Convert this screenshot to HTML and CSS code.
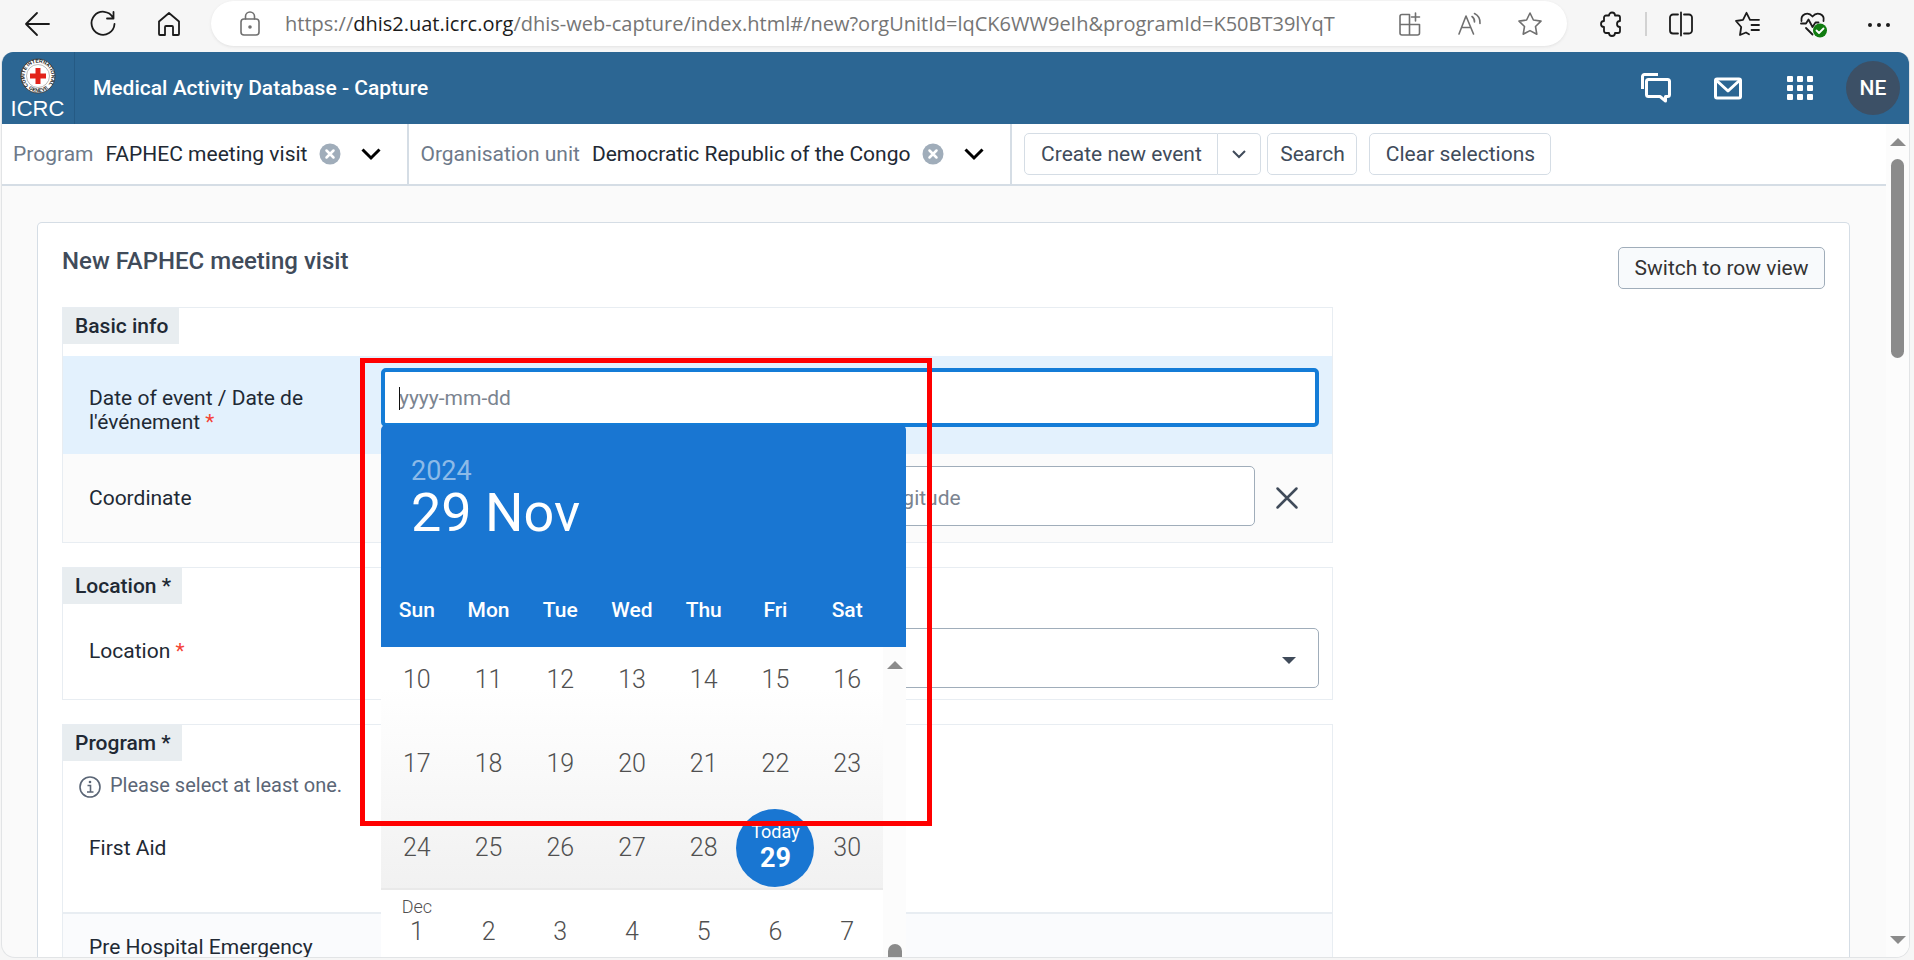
FILE: index.html
```html
<!DOCTYPE html>
<html lang="en">
<head>
<meta charset="utf-8">
<title>Medical Activity Database - Capture</title>
<link rel="stylesheet" href="styles.css">
</head>
<body>
<div class="toolbar">
  <div class="nav">
    <button class="tool" aria-label="Back"><svg viewBox="0 0 28 28"><path d="M26 14H3M14 3 3 14l11 11"/></svg></button>
    <button class="tool" aria-label="Refresh"><svg viewBox="0 0 28 28"><path d="M24 7.500A11.500 11.500 0 1 0 25.500 14M24.500 2v6.500h-6.500"/></svg></button>
    <button class="tool" aria-label="Home"><svg viewBox="0 0 28 28"><path d="M4 11.500 14 3l10 8.500V24a1 1 0 0 1-1 1h-5v-8a1 1 0 0 0-1-1h-6a1 1 0 0 0-1 1v8H5a1 1 0 0 1-1-1z"/></svg></button>
  </div>
  <div class="address">
    <button class="tool muted" aria-label="Site information"><svg viewBox="0 0 28 28"><rect x="5" y="9" width="18" height="16" rx="3"/><path d="M9.500 9V6.500a4.500 4.500 0 0 1 9 0V9"/><circle cx="14" cy="17" r="1" class="solid"/></svg></button>
    <div class="url">https://<span class="host">dhis2.uat.icrc.org</span>/dhis-web-capture/index.html#/new?orgUnitId=lqCK6WW9eIh&amp;programId=K50BT39lYqT</div>
    <div class="address-actions">
      <button class="tool muted" aria-label="Install app"><svg viewBox="0 0 28 28"><path d="M13.500 4.500H6A2 2 0 0 0 4 6.500v16.500a2 2 0 0 0 2 2h15.500a2 2 0 0 0 2-2v-8.500H4M13.500 4.500V25M19.500 3v8M15.500 7h8"/></svg></button>
      <button class="tool muted" aria-label="Read aloud"><svg viewBox="0 0 28 28"><path d="M3 24 10 6l7.500 18M5.800 17.500h9M16 6.500a6 6 0 0 1 2.500 5.500M18.500 3.500q6 3 5.500 10"/></svg></button>
      <button class="tool muted" aria-label="Add to favourites"><svg viewBox="0 0 28 28"><path d="m14 3 3.400 7 7.600 1.100-5.500 5.400 1.300 7.700-6.800-3.600-6.800 3.600 1.300-7.700L3 11.100 10.600 10z"/></svg></button>
    </div>
  </div>
  <div class="tools">
    <button class="tool" aria-label="Extensions"><svg viewBox="0 0 28 28"><path d="M9 5.500h3a3 3 0 0 1 6 0h3a2 2 0 0 1 2 2v3.500a3 3 0 0 0 0 6v4a2 2 0 0 1-2 2h-3a3 3 0 0 1-6 0H9a2 2 0 0 1-2-2v-4a3 3 0 0 1 0-6V7.500a2 2 0 0 1 2-2z"/></svg></button>
    <span class="tool-divider"></span>
    <button class="tool" aria-label="Split screen"><svg viewBox="0 0 28 28"><path d="M11 4.500H6a3 3 0 0 0-3 3v13a3 3 0 0 0 3 3h5M17 4.500h5a3 3 0 0 1 3 3v13a3 3 0 0 1-3 3h-5M14 2.500v23"/></svg></button>
    <button class="tool" aria-label="Favourites"><svg viewBox="0 0 28 28"><path d="M16 24.200v0l-3-1.700-6 2.500 1.200-8L3 11l7-1.200 3.500-7L17 9.800h9M18.500 15H26M18.500 20H26"/></svg></button>
    <button class="tool" aria-label="Browser essentials"><svg viewBox="0 0 28 28"><path d="M2.500 11C1.500 4 9 1 13.500 6.500 18 1 26 4 24.500 11M2 13.500h5l2.500-4 4 7.500 3-4.500h3M7 18l6.500 6.500"/><circle cx="21" cy="20.500" r="7" class="ok"/><path class="check" d="m17.500 20.500 2.500 2.500 4.500-4.500"/></svg></button>
    <button class="tool" aria-label="Settings and more"><svg viewBox="0 0 28 28"><circle class="dot" cx="5" cy="15" r="2"/><circle class="dot" cx="14" cy="15" r="2"/><circle class="dot" cx="23" cy="15" r="2"/></svg></button>
  </div>
</div>

<div class="app">
  <header class="header">
    <a class="logo" href="#" aria-label="ICRC">
      <svg class="emblem" viewBox="0 0 36 36">
        <circle cx="18" cy="18" r="17" fill="#fff" stroke="#444" stroke-width="1"/>
        <defs>
          <path id="ring-top" d="M9.400 28.300A13.400 13.400 0 1 1 26.600 28.300"/>
          <path id="ring-bottom" d="M7 29.500A16 16 0 0 0 29 29.500"/>
        </defs>
        <text class="ring"><textPath href="#ring-top" startOffset="1">COMITE INTERNATIONAL</textPath></text>
        <text class="ring"><textPath href="#ring-bottom" startOffset="2">GENEVE</textPath></text>
        <circle cx="18" cy="18" r="11.500" fill="#fff" stroke="#777" stroke-width=".5"/>
        <path d="M15.500 10h5v5.500H26v5h-5.500V26h-5v-5.500H10v-5h5.500z" fill="#e2231a"/>
      </svg>
      <span class="logo-name">ICRC</span>
    </a>
    <h1 class="app-title">Medical Activity Database - Capture</h1>
    <div class="header-actions">
      <button class="header-icon" aria-label="Interpretations"><svg viewBox="0 0 32 32"><path d="M2.500 17V4.500a2 2 0 0 1 2-2H18M8.500 7.500h19a2 2 0 0 1 2 2v13a2 2 0 0 1-2 2H25.500V29l-5.500-4.500H8.500a2 2 0 0 1-2-2v-13a2 2 0 0 1 2-2z"/></svg></button>
      <button class="header-icon" aria-label="Messages"><svg viewBox="0 0 32 32"><rect x="3.500" y="7" width="25" height="19" rx="1.500"/><path d="m4 8 12 11L28 8"/></svg></button>
      <button class="header-icon" aria-label="Apps"><svg viewBox="0 0 32 32"><g class="tiles"><rect x="3" y="4" width="6" height="6" rx="1"/><rect x="13" y="4" width="6" height="6" rx="1"/><rect x="23" y="4" width="6" height="6" rx="1"/><rect x="3" y="13" width="6" height="6" rx="1"/><rect x="13" y="13" width="6" height="6" rx="1"/><rect x="23" y="13" width="6" height="6" rx="1"/><rect x="3" y="22" width="6" height="6" rx="1"/><rect x="13" y="22" width="6" height="6" rx="1"/><rect x="23" y="22" width="6" height="6" rx="1"/></g></svg></button>
      <button class="avatar">NE</button>
    </div>
  </header>

  <div class="body">
    <main class="main">
      <div class="selector">
        <div class="context program">
          <span class="context-label">Program</span>
          <span class="context-value">FAPHEC meeting visit</span>
          <button class="clear" aria-label="Clear program"><svg viewBox="0 0 22 22"><circle cx="11" cy="11" r="10.500"/><path d="m7.500 7.500 7 7m0-7-7 7"/></svg></button>
          <button class="expand" aria-label="Choose program"><svg viewBox="0 0 20 20"><path d="m1.500 5.500 8.500 8.500 8.500-8.500"/></svg></button>
        </div>
        <div class="context unit">
          <span class="context-label">Organisation unit</span>
          <span class="context-value">Democratic Republic of the Congo</span>
          <button class="clear" aria-label="Clear organisation unit"><svg viewBox="0 0 22 22"><circle cx="11" cy="11" r="10.500"/><path d="m7.500 7.500 7 7m0-7-7 7"/></svg></button>
          <button class="expand" aria-label="Choose organisation unit"><svg viewBox="0 0 20 20"><path d="m1.500 5.500 8.500 8.500 8.500-8.500"/></svg></button>
        </div>
        <div class="actions">
          <div class="split">
            <button class="btn create">Create new event</button>
            <button class="btn more" aria-label="More create options"><svg viewBox="0 0 16 16"><path d="m2 5 6 6 6-6"/></svg></button>
          </div>
          <button class="btn search">Search</button>
          <button class="btn clear-all">Clear selections</button>
        </div>
      </div>

      <form class="card">
        <div class="card-head">
          <h2 class="card-title">New FAPHEC meeting visit</h2>
          <button type="button" class="btn switch">Switch to row view</button>
        </div>

        <section class="section basic">
          <h3 class="section-title">Basic info</h3>
          <div class="row active">
            <label class="label" for="event-date">Date of event / Date de l'événement <span class="required">*</span></label>
            <div class="field date-field">
              <input class="input focused" id="event-date" type="text" placeholder="yyyy-mm-dd">
              <span class="caret"></span>
              <div class="picker">
                <div class="picker-head">
                  <div class="picker-year">2024</div>
                  <div class="picker-date">29 Nov</div>
                  <div class="weekdays"><span>Sun</span><span>Mon</span><span>Tue</span><span>Wed</span><span>Thu</span><span>Fri</span><span>Sat</span></div>
                </div>
                <div class="picker-body">
                  <div class="weeks">
                    <div class="days november">
                      <button type="button" class="day">10</button><button type="button" class="day">11</button><button type="button" class="day">12</button><button type="button" class="day">13</button><button type="button" class="day">14</button><button type="button" class="day">15</button><button type="button" class="day">16</button>
                      <button type="button" class="day">17</button><button type="button" class="day">18</button><button type="button" class="day">19</button><button type="button" class="day">20</button><button type="button" class="day">21</button><button type="button" class="day">22</button><button type="button" class="day">23</button>
                      <button type="button" class="day">24</button><button type="button" class="day">25</button><button type="button" class="day">26</button><button type="button" class="day">27</button><button type="button" class="day">28</button><button type="button" class="day"><span class="today"><span class="today-label">Today</span><span>29</span></span></button><button type="button" class="day">30</button>
                    </div>
                    <div class="days">
                      <button type="button" class="day"><span class="month">Dec</span>1</button><button type="button" class="day">2</button><button type="button" class="day">3</button><button type="button" class="day">4</button><button type="button" class="day">5</button><button type="button" class="day">6</button><button type="button" class="day">7</button>
                    </div>
                  </div>
                  <div class="picker-scroll"><span class="arrow-up"></span><span class="picker-thumb"></span></div>
                </div>
              </div>
              <div class="highlight"></div>
            </div>
          </div>
          <div class="row coordinate">
            <span class="label">Coordinate</span>
            <div class="field pair">
              <input class="input latitude" type="text" aria-label="Latitude">
              <input class="input longitude" type="text" aria-label="Longitude" placeholder="Longitude">
              <button type="button" class="remove" aria-label="Clear coordinate"><svg viewBox="0 0 24 24"><path d="m2.500 2.500 19 19m0-19-19 19"/></svg></button>
            </div>
          </div>
        </section>

        <section class="section location">
          <h3 class="section-title">Location *</h3>
          <div class="row">
            <label class="label" for="location">Location <span class="required">*</span></label>
            <div class="field select-field">
              <select class="input" id="location"><option></option></select>
              <span class="select-arrow"></span>
            </div>
          </div>
        </section>

        <section class="section activities">
          <h3 class="section-title">Program *</h3>
          <p class="hint"><svg viewBox="0 0 22 22"><circle cx="11" cy="11" r="10"/><path d="M8.500 9.500H11.500V16M8 16h6.500"/><circle class="hint-dot" cx="11" cy="6" r="1.300"/></svg>Please select at least one.</p>
          <div class="row first-aid"><span class="label">First Aid</span></div>
          <div class="row alt"><span class="label">Pre Hospital Emergency</span></div>
        </section>
      </form>
    </main>
    <div class="scrollbar"><span class="arrow-up"></span><span class="thumb"></span><span class="arrow-down"></span></div>
  </div>
</div>
</body>
</html>
```
FILE: styles.css
```css
* { box-sizing: border-box; }

body {
  margin: 0;
  height: 100vh;
  display: flex;
  flex-direction: column;
  overflow: hidden;
  background: #f6f6f6;
  font-family: Roboto, sans-serif;
  font-size: 21px;
  line-height: 24px;
  color: #212934;
}

button {
  margin: 0;
  padding: 0;
  border: 0;
  background: none;
  font: inherit;
  color: inherit;
}

h1, h2, h3, p { margin: 0; }
svg { display: block; fill: none; }

/* Browser toolbar */
.toolbar {
  flex: none;
  display: flex;
  height: 52px;
  padding: 1px 21px 6px 23px;
}
.nav { display: flex; align-items: center; gap: 38px; margin-right: 28px; }
.tool { flex: none; width: 28px; height: 28px; }
.tool svg { width: 28px; height: 28px; stroke: #1b1b1b; stroke-width: 1.8; stroke-linecap: round; stroke-linejoin: round; }
.tool.muted svg { stroke: #707070; stroke-width: 1.6; }
.tool .solid { fill: #707070; }
.tool .dot { fill: #1b1b1b; stroke: none; }
.tool .ok { fill: #107c10; stroke: none; }
.tool .check { stroke: #fff; }
.address {
  flex: 1;
  min-width: 0;
  display: flex;
  align-items: center;
  gap: 21px;
  padding: 0 23px 0 25px;
  border-radius: 23px;
  background: #fff;
  box-shadow: 0 1px 3px #e2e2e2;
}
.url {
  flex: 1;
  min-width: 0;
  overflow: hidden;
  white-space: nowrap;
  font-family: "Open Sans", sans-serif;
  font-size: 20px;
  line-height: 28px;
  color: #757575;
}
.host { color: #1b1b1b; }
.address-actions { display: flex; gap: 32px; }
.tools { display: flex; align-items: center; gap: 38px; margin-left: 30px; }
.tool-divider { width: 2px; height: 24px; margin: 0 -18px; background: #d2d2d2; }

/* Application frame */
.app {
  flex: 1;
  min-height: 0;
  display: flex;
  flex-direction: column;
  margin: 0 4px 2px 1px;
  border: 1px solid #e2e4e6;
  border-top: 0;
  border-radius: 12px 12px 14px 14px;
  overflow: hidden;
  background: #fafafa;
}
.header {
  flex: none;
  display: flex;
  align-items: center;
  height: 72px;
  margin: 0 -1px;
  background: #2c6693;
  color: #fff;
}
.logo {
  display: flex;
  flex-direction: column;
  align-items: center;
  width: 74px;
  height: 72px;
  padding-top: 6px;
  border-right: 1px solid #255a84;
  color: #fff;
  text-decoration: none;
}
.emblem { width: 36px; height: 36px; }
.ring { font: 700 5px "Liberation Sans", sans-serif; fill: #222; }
.logo-name { font: 22px/30px "Liberation Sans", sans-serif; }
.app-title { margin-left: 18px; font-size: 21px; line-height: 24px; font-weight: 500; }
.header-actions { display: flex; align-items: center; gap: 40px; margin-left: auto; padding-right: 10px; }
.header-icon { width: 32px; height: 32px; }
.header-icon svg { width: 32px; height: 32px; stroke: #fff; stroke-width: 3; stroke-linejoin: round; }
.header-icon .tiles { fill: #fff; stroke: none; }
.avatar { width: 54px; height: 54px; margin-left: -10px; border-radius: 50%; background: #3c5066; font-weight: 500; }

.body { flex: 1; min-height: 0; display: flex; }
.main { flex: 1; min-width: 0; overflow: hidden; }

/* Context selector */
.selector {
  display: flex;
  height: 62px;
  border-bottom: 2px solid #d5dde5;
  background: #fff;
}
.context {
  display: flex;
  align-items: center;
  padding: 0 26px 0 11px;
  border-right: 2px solid #d5dde5;
  white-space: nowrap;
}
.context-label { margin-right: 12px; color: #6e7a8a; }
.context-value { margin-right: 12px; }
.clear { width: 22px; height: 22px; margin-right: 20px; }
.clear svg { width: 22px; height: 22px; fill: #a0adba; stroke: #fff; stroke-width: 2.5; stroke-linecap: round; }
.clear circle { stroke: none; }
.expand { width: 20px; height: 20px; }
.expand svg { width: 20px; height: 20px; stroke: #000; stroke-width: 3; }
.actions { display: flex; align-items: center; padding-left: 12px; }
.btn {
  height: 42px;
  border: 1px solid #d5dde5;
  border-radius: 5px;
  background: #fff;
  color: #404b5a;
  white-space: nowrap;
}
.split { display: flex; margin-right: 6px; }
.create { width: 194px; border-radius: 5px 0 0 5px; }
.more { display: flex; align-items: center; justify-content: center; width: 43px; border-left: 0; border-radius: 0 5px 5px 0; }
.more svg { width: 16px; height: 16px; stroke: #404b5a; stroke-width: 2; }
.search { width: 90px; margin-right: 12px; }
.clear-all { width: 182px; }

/* Form card */
.card {
  margin: 36px 36px 0 35px;
  padding: 24px 24px 0;
  border: 1px solid #d5dde5;
  border-bottom: 0;
  border-radius: 5px 5px 0 0;
  background: #fff;
}
.card-head { display: flex; align-items: flex-start; justify-content: space-between; height: 60px; }
.card-title { font-size: 24px; line-height: 28px; font-weight: 500; color: #404b5a; }
.switch { width: 207px; border-color: #a0adba; background: #f8fafc; color: #333; }
.section {
  max-width: 1271px;
  margin-bottom: 24px;
  border: 1px solid #e8edf2;
}
.section-title {
  width: fit-content;
  padding: 6px 11px 6px 12px;
  background: #e8edf0;
  font-size: 21px;
  line-height: 24px;
  font-weight: 500;
}
.row { display: flex; }
.label { flex: none; width: 318px; padding: 31px 60px 0 26px; white-space: normal; }
.required { color: #f44336; }
.field { flex: 1; min-width: 0; position: relative; margin-right: 13px; }
.input {
  display: block;
  width: 100%;
  height: 60px;
  padding: 4px 16px 0;
  border: 1px solid #a0adba;
  border-radius: 5px;
  background: #fff;
  font: 21px/24px Roboto, sans-serif;
  color: #212934;
  appearance: none;
  outline: 0;
}
.input::placeholder { color: #7b8490; opacity: 1; }
.input.focused { height: 59px; padding: 0 14px; border: 4px solid #147cd7; }
.basic .section-title { margin-bottom: 12px; }
.active { height: 98px; padding-top: 12px; background: #e3f1fd; }
.active .label { padding: 18px 60px 0 26px; }
.coordinate { height: 88px; padding-top: 12px; background: #fbfbfb; }
.coordinate .label { padding-top: 20px; }
.pair { display: flex; align-items: flex-start; gap: 12px; }
.pair .input { width: auto; min-width: 0; }
.pair .latitude { flex: 8 1 0; }
.pair .longitude { flex: 7 1 0; }
.remove { width: 24px; height: 24px; margin: 20px 20px 0 8px; }
.remove svg { width: 24px; height: 24px; stroke: #404b5a; stroke-width: 2.5; stroke-linecap: round; }
.location .row { height: 95px; padding-top: 24px; }
.location .label { padding-top: 11px; }
.select-arrow {
  position: absolute;
  top: 29px;
  right: 23px;
  border: 7px solid transparent;
  border-top-color: #404b5a;
  border-bottom: 0;
}
.hint { display: flex; align-items: center; gap: 9px; height: 48px; padding-left: 16px; font-size: 20px; color: #5b6676; }
.hint svg { width: 22px; height: 22px; margin-top: 4px; stroke: #5b6676; stroke-width: 1.6; }
.hint .hint-dot { fill: #5b6676; stroke: none; }
.first-aid { height: 103px; }
.first-aid .label { padding-top: 27px; }
.alt { height: 80px; border-top: 2px solid #e8edf2; background: #fafbfd; }
.alt .label { padding: 21px 20px 0 26px; }

/* Date picker */
.caret { position: absolute; top: 19px; left: 18px; width: 1px; height: 23px; background: #111; }
.picker { position: absolute; top: 57px; left: 0; z-index: 2; width: 525px; }
.picker-head { height: 222px; padding: 32px 0 0 30px; border-radius: 5px 5px 0 0; background: #1976d2; color: #fff; }
.picker-year { font-size: 27px; line-height: 28px; color: #8cbae8; }
.picker-date { font-size: 54px; line-height: 56px; }
.weekdays {
  display: grid;
  grid-template-columns: repeat(7, 1fr);
  margin: 57px 23px 0 -30px;
  text-align: center;
  font-weight: 500;
}
.picker-body { display: flex; overflow: hidden; }
.weeks { flex: 1; margin-top: -9px; background: #fff; }
.days { display: grid; grid-template-columns: repeat(7, 1fr); grid-auto-rows: 84px; }
.november { box-shadow: inset 0 -2px #e9e9e9; background: linear-gradient(#fff 20%, #f1f1f1); }
.day {
  position: relative;
  display: flex;
  align-items: center;
  justify-content: center;
  font-size: 25px;
  line-height: 28px;
  font-weight: 300;
  color: #505050;
}
.month { position: absolute; top: 3px; left: 0; right: 0; text-align: center; font-size: 18px; }
.today {
  flex: none;
  display: flex;
  flex-direction: column;
  align-items: center;
  width: 78px;
  height: 78px;
  margin: 0 -4px;
  padding-top: 11px;
  border-radius: 50%;
  background: #1976d2;
  color: #fff;
  font-size: 27px;
  font-weight: 700;
}
.today-label { font-size: 18px; line-height: 24px; font-weight: 400; }
.picker-scroll {
  flex: none;
  display: flex;
  flex-direction: column;
  align-items: center;
  width: 23px;
  padding-top: 14px;
  background: #fcfcfc;
}
.picker-thumb { flex: 1; width: 14px; margin-top: 275px; border-radius: 7px 7px 0 0; background: #8b8b8b; }
.highlight {
  position: absolute;
  z-index: 3;
  top: -10px;
  left: -21px;
  width: 572px;
  height: 468px;
  border: 5px solid #f00;
}

/* Scrollbar */
.scrollbar {
  flex: none;
  display: flex;
  flex-direction: column;
  align-items: center;
  width: 23px;
  padding: 14px 0 13px;
  background: #fcfcfc;
}
.arrow-up, .arrow-down { border: 8px solid transparent; }
.arrow-up { border-top: 0; border-bottom-color: #8b8b8b; }
.arrow-down { margin-top: auto; border-bottom: 0; border-top-color: #8b8b8b; }
.thumb { width: 13px; height: 199px; margin-top: 13px; border-radius: 7px; background: #8b8b8b; }
```
